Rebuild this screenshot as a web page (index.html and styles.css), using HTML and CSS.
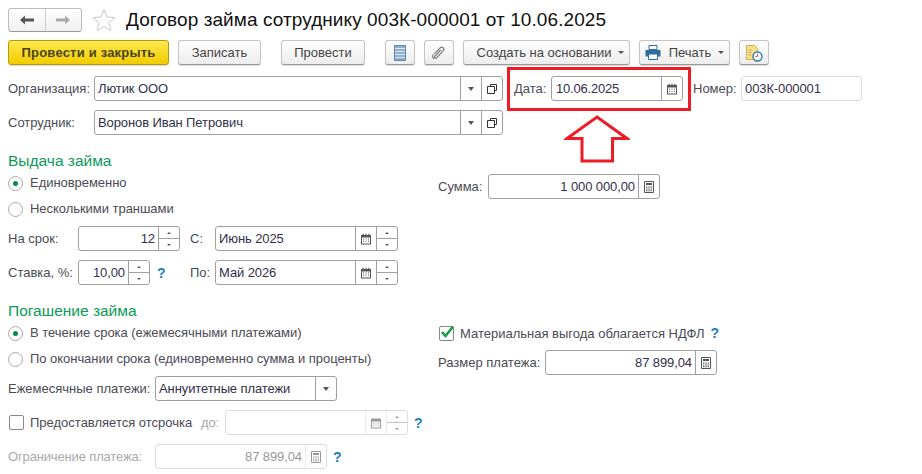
FILE: index.html
```html
<!DOCTYPE html>
<html lang="ru">
<head>
<meta charset="utf-8">
<title>Договор займа</title>
<link rel="stylesheet" href="styles.css">
</head>
<body>
<svg class="sprite" width="0" height="0" aria-hidden="true">
  <symbol id="i-cal" viewBox="0 0 12 12"><path d="M1 2h10v9.500H1z" fill="#555"/><path d="M2.500 .8h1.200v2.400H2.500zM5.400 .8h1.200v2.400H5.400zM8.300 .8h1.200v2.400H8.300z" fill="#555"/><path d="M2 4.500h8V10.500H2z" fill="#fff"/><path d="M3 5.500h1v1H3zM5.500 5.500h1v1h-1zM8 5.500h1v1H8zM3 7.800h1v1H3zM5.500 7.800h1v1h-1zM8 7.800h1v1H8z" fill="#555"/></symbol>
  <symbol id="i-calc" viewBox="0 0 12 12"><path d="M1.500 .5h9v11h-9z" fill="#fff" stroke="#555"/><path d="M3 2h6v2H3z" fill="#555"/><path d="M3 5.500h1.500v1H3zM5.300 5.500h1.500v1H5.300zM7.500 5.500H9v1H7.500zM3 7.500h1.500v1H3zM5.300 7.500h1.500v1H5.300zM7.500 7.500H9v1H7.500zM3 9.300h1.500v1H3zM5.300 9.300h1.500v1H5.300zM7.500 9.300H9v1H7.500z" fill="#555"/></symbol>
  <symbol id="i-open" viewBox="0 0 10 10"><path d="M3.500 2.500v-2h6v6h-2" fill="none" stroke="#333"/><path d="M.5 2.500h7v7h-7z" fill="#fff" stroke="#333"/></symbol>
</svg>
<header class="title-bar">
  <div class="nav">
    <span class="nav-btn"><svg width="16" height="10" viewBox="0 0 16 10"><path d="M1 5l5-4.500V3.500h9v3H6v3z" fill="#555"/></svg></span>
    <span class="nav-btn"><svg width="16" height="10" viewBox="0 0 16 10"><path d="M15 5l-5-4.500V3.500H1v3h9v3z" fill="#aaa"/></svg></span>
  </div>
  <svg class="star" width="24" height="24" viewBox="0 0 24 24"><path d="M12 1.500l3 7.500 8 .6-6.100 5.200 1.900 7.800L12 18.400l-6.800 4.200 1.900-7.800L1 9.600 9 9z" fill="#fff" stroke="#c8c8c8"/></svg>
  <h1>Договор займа сотруднику 003К-000001 от 10.06.2025</h1>
</header>
<nav class="toolbar">
  <button class="btn primary">Провести и закрыть</button>
  <button class="btn b-save">Записать</button>
  <button class="btn b-post">Провести</button>
  <button class="btn b-icon b-list"><svg width="12" height="16" viewBox="0 0 12 16"><path d="M.5.500h11v15H.5z" fill="#8fb0cc" stroke="#5f86a8"/><path d="M1 3.500h10M1 6.500h10M1 9.500h10M1 12.500h10" stroke="#dfe9f2"/></svg></button>
  <button class="btn b-icon b-clip"><svg width="16" height="16" viewBox="0 0 16 16"><path d="M3.200 9.200l6-6.400c1.800-1.900 4.900.6 3 2.800l-6.500 7.300c-1.100 1.200-2.900-.2-1.800-1.600l5.800-6.500M2.800 13.400c-1.500-1-1.400-2.900-.4-4" fill="none" stroke="#777" stroke-width="1.200"/></svg></button>
  <button class="btn b-create">Создать на основании<i class="caret"></i></button>
  <button class="btn b-print"><svg width="16" height="15" viewBox="0 0 16 15"><path d="M4 .5h8v4H4z" fill="#fff" stroke="#2f6c9c"/><path d="M.5 5h15v6.500H.5z" fill="#2f6c9c"/><path d="M3.500 9h9v5.500h-9z" fill="#fff" stroke="#2f6c9c"/></svg>Печать<i class="caret"></i></button>
  <button class="btn b-icon b-report"><svg width="18" height="18" viewBox="0 0 18 18"><path d="M1.500 1.500h8l3 3v11h-11z" fill="#f6e08f" stroke="#d0b050"/><path d="M3.500 6h3M3.500 8.500h3M3.500 11h3" stroke="#c9a94c"/><circle cx="12.500" cy="12.500" r="4.500" fill="#fff" stroke="#2f78b4" stroke-width="1.400"/><path d="M12.500 10v2.500h-2" fill="none" stroke="#d9534f"/></svg></button>
</nav>
<main class="form">
  <div class="row">
    <label class="lab w-86">Организация:</label>
    <div class="field w-409"><span class="val">Лютик ООО</span><span class="fb"><i class="tri"></i></span><span class="fb"><svg class="ico10"><use href="#i-open"/></svg></span></div>
    <label class="lab lab-date">Дата:</label>
    <div class="field w-132"><span class="val val-date">10.06.2025</span><span class="fb"><svg class="ico12"><use href="#i-cal"/></svg></span></div>
    <label class="lab lab-num">Номер:</label>
    <div class="field w-121 soft"><span class="val">003К-000001</span></div>
  </div>
  <div class="row gap">
    <label class="lab w-86">Сотрудник:</label>
    <div class="field w-409"><span class="val">Воронов Иван Петрович</span><span class="fb"><i class="tri"></i></span><span class="fb"><svg class="ico10"><use href="#i-open"/></svg></span></div>
  </div>

  <section class="group">
    <div class="left">
      <h2>Выдача займа</h2>
      <div class="choice"><i class="radio on"></i><span class="choice-text">Единовременно</span></div>
      <div class="choice"><i class="radio"></i><span class="choice-text">Несколькими траншами</span></div>
      <div class="row first">
        <label class="lab w-70">На срок:</label>
        <div class="field w-102"><span class="val num">12</span><span class="fb spin"><i></i><i></i></span></div>
        <label class="lab lab-per">С:</label>
        <div class="field w-183"><span class="val">Июнь 2025</span><span class="fb"><svg class="ico12"><use href="#i-cal"/></svg></span><span class="fb spin"><i></i><i></i></span></div>
      </div>
      <div class="row gap">
        <label class="lab w-70">Ставка, %:</label>
        <div class="field w-72"><span class="val num">10,00</span><span class="fb spin"><i></i><i></i></span></div>
        <span class="help h-rate">?</span>
        <label class="lab lab-per lab-to">По:</label>
        <div class="field w-183"><span class="val">Май 2026</span><span class="fb"><svg class="ico12"><use href="#i-cal"/></svg></span><span class="fb spin"><i></i><i></i></span></div>
      </div>
    </div>
    <div class="right right-sum">
      <div class="row">
        <label class="lab w-50">Сумма:</label>
        <div class="field w-172"><span class="val num">1 000 000,00</span><span class="fb"><svg class="ico12"><use href="#i-calc"/></svg></span></div>
      </div>
    </div>
  </section>

  <section class="group">
    <div class="left">
      <h2>Погашение займа</h2>
      <div class="choice"><i class="radio on"></i><span class="choice-text">В течение срока (ежемесячными платежами)</span></div>
      <div class="choice"><i class="radio"></i><span class="choice-text">По окончании срока (единовременно сумма и проценты)</span></div>
      <div class="row first">
        <label class="lab w-147">Ежемесячные платежи:</label>
        <div class="field w-182"><span class="val">Аннуитетные платежи</span><span class="fb"><i class="tri"></i></span></div>
      </div>
      <div class="row gap">
        <i class="check"></i><span class="lab w-171">Предоставляется отсрочка</span>
        <label class="lab off w-24">до:</label>
        <div class="field w-183 dis"><span class="val"></span><span class="fb"><svg class="ico12"><use href="#i-cal"/></svg></span><span class="fb spin"><i></i><i></i></span></div>
        <span class="help h-after">?</span>
      </div>
      <div class="row gap">
        <label class="lab off w-147">Ограничение платежа:</label>
        <div class="field w-172 dis"><span class="val num">87 899,04</span><span class="fb"><svg class="ico12"><use href="#i-calc"/></svg></span></div>
        <span class="help h-after">?</span>
      </div>
    </div>
    <div class="right right-ndfl">
      <div class="ndfl">
        <i class="check on"><svg width="16" height="14" viewBox="0 0 16 14"><path d="M3 7l3.500 4L14 1.500" fill="none" stroke="#1d9a4b" stroke-width="2.600"/></svg></i>
        <span class="lab">Материальная выгода облагается НДФЛ</span>
        <span class="help h-after">?</span>
      </div>
      <div class="row">
        <label class="lab w-107">Размер платежа:</label>
        <div class="field w-172"><span class="val num">87 899,04</span><span class="fb"><svg class="ico12"><use href="#i-calc"/></svg></span></div>
      </div>
    </div>
  </section>

  <div class="marker"></div>
  <svg class="arrow" width="66" height="48" viewBox="0 0 66 48"><path d="M33 2L63 23.500H48.500V46H18V23.500H3z" fill="#fff" stroke="#ee1c25" stroke-width="3"/></svg>
</main>
</body>
</html>
```
FILE: styles.css
```css
* { box-sizing: border-box; }
html, body { margin: 0; padding: 0; }
body { width: 922px; height: 474px; background: #fff; overflow: hidden; position: relative; font-family: "Liberation Sans", Arial, sans-serif; font-size: 13px; color: #333; }
.sprite { position: absolute; }
.title-bar { display: flex; align-items: center; height: 36px; padding: 4px 0 0 8px; }
.nav { display: flex; width: 74px; height: 24px; border: 1px solid #bdbdbd; border-bottom-color: #999; border-radius: 3px; background: linear-gradient(#fff, #f0f0f0); }
.nav-btn { flex: 1; display: flex; align-items: center; justify-content: center; }
.nav-btn + .nav-btn { border-left: 1px solid #ccc; }
.star { margin-left: 10px; }
h1 { margin: 0 0 0 10px; font-size: 19px; letter-spacing: .08px; font-weight: 400; color: #111; white-space: nowrap; }
.toolbar { display: flex; height: 25px; margin-top: 4px; padding-left: 8px; }
.btn { display: flex; align-items: center; justify-content: center; height: 25px; margin: 0; padding: 0; border: 1px solid #c4c4c4; border-bottom: 1px solid #999; border-radius: 3px; background: linear-gradient(#fff, #ededed); font: 13px "Liberation Sans", Arial, sans-serif; color: #444; box-shadow: 0 1px 1px rgba(0,0,0,.15); }
.primary { width: 161px; border-color: #b49a12; background: linear-gradient(#ffe94d, #f2cc00); font-weight: 700; letter-spacing: .2px; color: #4a4420; }
.b-save { width: 83px; margin-left: 9px; }
.b-post { width: 84px; margin-left: 20px; }
.b-icon { width: 30px; }
.b-list { margin-left: 20px; }
.b-clip { margin-left: 9px; }
.b-create { width: 167px; margin-left: 9px; padding-left: 8px; }
.b-print { width: 91px; margin-left: 9px; }
.b-print svg { margin-right: 8px; }
.b-report { margin-left: 9px; }
.caret { width: 0; height: 0; margin-left: 7px; border: 3px solid transparent; border-top: 3px solid #555; border-bottom: 0; }
.form { padding: 11px 0 0 8px; }
.row { display: flex; align-items: center; height: 25px; }
.gap { margin-top: 9px; }
.first { margin-top: 4px; }
.lab { display: block; flex: none; color: #4b4b55; white-space: nowrap; }
.off { color: #aaa; letter-spacing: -.15px; }
.field { display: flex; flex: none; height: 25px; border: 1px solid #a0a0a0; border-radius: 3px; background: #fff; }
.soft { border-color: #ddd; }
.dis { border-color: #ddd; }
.dis .val { color: #999; }
.val { flex: 1; min-width: 0; padding: 0 3px; line-height: 23px; color: #33304a; white-space: nowrap; letter-spacing: -.1px; }
.val-date { padding-left: 4px; letter-spacing: -.2px; }
.num { text-align: right; }
.fb { display: flex; flex: none; align-items: center; justify-content: center; width: 21px; border-left: 1px solid #a0a0a0; }
.dis .fb { border-color: #ddd; opacity: .6; }
.tri { width: 0; height: 0; border: 3px solid transparent; border-top: 4px solid #555; border-bottom: 0; }
.ico10 { width: 10px; height: 10px; }
.ico12 { width: 12px; height: 12px; }
.spin { flex-direction: column; align-items: stretch; }
.spin i { flex: 1; position: relative; }
.spin i + i { border-top: 1px solid #a0a0a0; }
.spin i::after { content: ""; position: absolute; left: 8px; top: 5px; border: 2px solid transparent; border-bottom: 2px solid #555; border-top: 0; }
.spin i + i::after { border-top: 2px solid #555; border-bottom: 0; }
.w-86 { width: 86px; }
.w-70 { width: 70px; }
.w-50 { width: 50px; }
.w-147 { width: 147px; }
.w-107 { width: 107px; }
.w-171 { width: 171px; }
.w-24 { width: 24px; }
.w-409 { width: 409px; }
.w-132 { width: 132px; }
.w-121 { width: 121px; }
.w-102 { width: 102px; }
.w-72 { width: 72px; }
.w-183 { width: 183px; }
.w-172 { width: 172px; }
.w-182 { width: 182px; }
.lab-date { width: 37px; margin-left: 11px; }
.lab-num { width: 48px; margin-left: 10px; }
.lab-per { width: 25px; margin-left: 10px; }
.lab-to { margin-left: 10px; }
.help { flex: none; font-weight: 700; font-size: 14px; color: #1c7cc0; }
.h-rate { width: 30px; margin-left: 7px; margin-right: -7px; }
.h-after { margin-left: 6px; }
.group { display: flex; }
.left { width: 430px; flex: none; }
h2 { height: 17px; margin: 18px 0 0; font-size: 15.500px; line-height: 15px; font-weight: 400; color: #0a9a5a; }
.choice { display: flex; align-items: center; height: 26px; color: #4b4b55; letter-spacing: -.04px; }
.choice-text { padding-bottom: 2px; }
.radio { flex: none; display: flex; align-items: center; justify-content: center; width: 15px; height: 15px; margin-right: 7px; border: 1px solid #aaa; border-radius: 50%; background: #fff; }
.radio.on::after { content: ""; width: 5px; height: 5px; border-radius: 50%; background: #0a8a4a; }
.check { flex: none; display: block; position: relative; width: 15px; height: 15px; margin: 0 6px 0 1px; border: 1px solid #888; border-radius: 2px; background: #fff; }
.check svg { position: absolute; left: -1px; top: -2px; }
.right-sum { padding-top: 39px; }
.right-ndfl { padding-top: 35px; }
.ndfl { display: flex; align-items: center; height: 26px; margin-bottom: 4px; }
.marker { position: absolute; left: 507px; top: 67px; width: 184px; height: 44px; border: 3px solid #ee1c25; }
.arrow { position: absolute; left: 564px; top: 115px; }
```
